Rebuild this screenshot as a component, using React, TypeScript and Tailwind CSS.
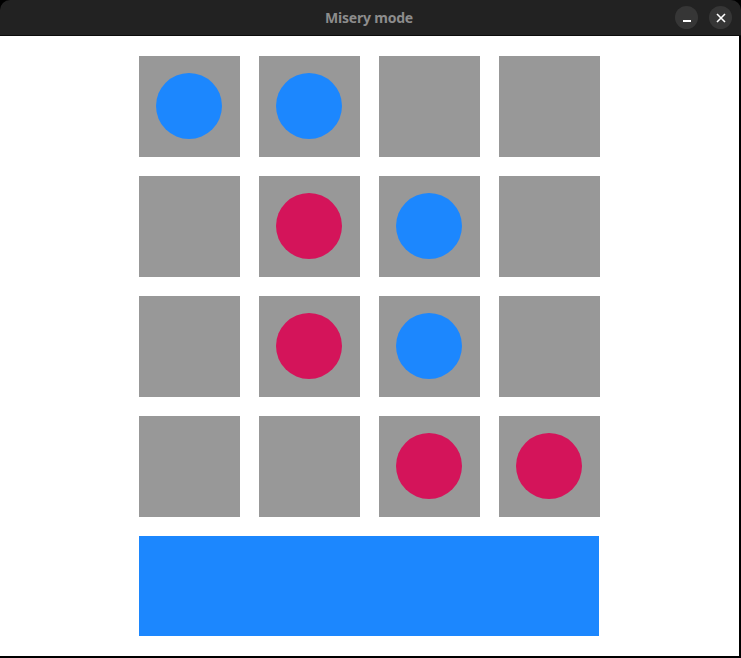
const board: (null | 'blue' | 'red')[][] = [
  ['blue', 'blue', null, null],
  [null, 'red', 'blue', null],
  [null, 'red', 'blue', null],
  [null, null, 'red', 'red'],
];

export default function App() {
  return (
    <div className="w-[741px] h-[658px] bg-black flex flex-col overflow-hidden" style={{ fontFamily: '"Noto Sans", "Open Sans", sans-serif' }}>
      {/* Title bar */}
      <div className="h-[36px] bg-[#222222] rounded-t-[10px] border-b border-[#0c0c0c] relative flex items-center justify-center shrink-0">
        <span className="text-[14px] font-bold text-[#8c8c8c] tracking-[-0.2px] mr-[3px]">Misery mode</span>
        <div className="absolute right-[9px] top-[6px] flex gap-[11px]">
          <div className="w-[23px] h-[23px] rounded-full bg-[#363636] flex items-center justify-center">
            <div className="w-[8px] h-[2px] bg-white mt-[6px]" />
          </div>
          <div className="w-[23px] h-[23px] rounded-full bg-[#363636] flex items-center justify-center">
            <svg width="10" height="10" viewBox="0 0 10 10">
              <path d="M1 1L9 9M9 1L1 9" stroke="white" strokeWidth="1.6" />
            </svg>
          </div>
        </div>
      </div>

      {/* Content */}
      <div className="w-[739px] h-[620px] bg-white pl-[139px] pt-[20px] flex flex-col gap-[19px] shrink-0">
        <div className="grid grid-cols-[repeat(4,101px)] gap-[19px]">
          {board.flat().map((cell, i) => (
            <div key={i} className="w-[101px] h-[101px] bg-[#989898] flex items-center justify-center pr-[1px] pb-[1px]">
              {cell === 'blue' && <div className="w-[66px] h-[66px] rounded-full bg-[#1c87fe]" />}
              {cell === 'red' && <div className="w-[66px] h-[66px] rounded-full bg-[#d4145a]" />}
            </div>
          ))}
        </div>
        <div className="w-[460px] h-[100px] bg-[#1c87fe]" />
      </div>
    </div>
  );
}
